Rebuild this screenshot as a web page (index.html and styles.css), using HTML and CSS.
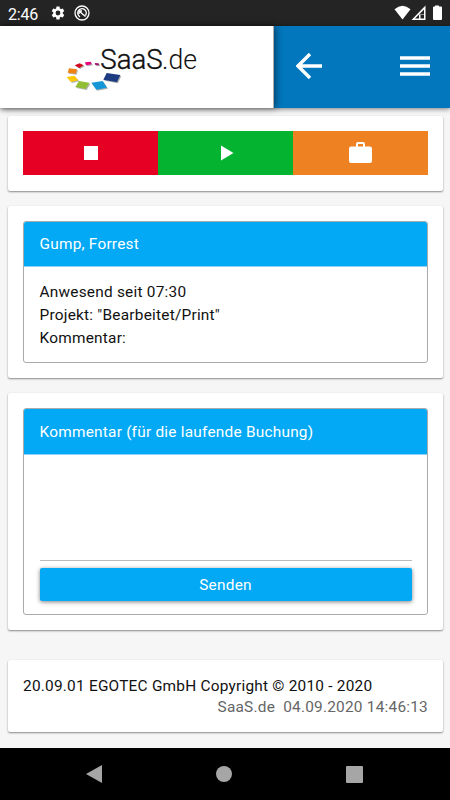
FILE: index.html
```html
<!DOCTYPE html>
<html lang="de">
<head>
    <meta charset="utf-8">
    <title>SaaS.de</title>
    <link rel="stylesheet" href="styles.css">
</head>
<body>
    <div class="statusbar">
        <span class="time">2:46</span>
        <svg class="gear" width="16" height="16" viewBox="0 0 24 24"><path fill="#fff" d="M19.14 12.94c.04-.3.06-.61.06-.94 0-.32-.02-.64-.07-.94l2.03-1.58a.49.49 0 0 0 .12-.61l-1.92-3.32a.49.49 0 0 0-.59-.22l-2.39.96a7 7 0 0 0-1.62-.94l-.36-2.54a.48.48 0 0 0-.48-.41h-3.84a.48.48 0 0 0-.47.41l-.36 2.54a7.3 7.3 0 0 0-1.62.94l-2.39-.96a.48.48 0 0 0-.59.22L2.74 8.87a.48.48 0 0 0 .12.61l2.03 1.58a6 6 0 0 0 0 1.88l-2.03 1.58a.49.49 0 0 0-.12.61l1.92 3.32c.12.22.37.29.59.22l2.39-.96c.5.38 1.03.7 1.62.94l.36 2.54c.05.24.24.41.48.41h3.84c.24 0 .44-.17.47-.41l.36-2.54a7 7 0 0 0 1.62-.94l2.39.96c.22.08.47 0 .59-.22l1.92-3.32a.48.48 0 0 0-.12-.61zM12 15.6a3.6 3.6 0 1 1 0-7.2 3.6 3.6 0 0 1 0 7.2z"/></svg>
        <svg class="badge" width="16" height="16" viewBox="0 0 16 16" fill="none" stroke="#fff">
            <circle cx="8" cy="8" r="7" stroke-width="1.3"/>
            <path d="M6 11.800A4.300 4.300 0 1 1 11.500 10.500" stroke-width="1.300"/>
            <path d="M5 6L11.500 11.500M5 6.500V9M5 6H8" stroke-width="1.400"/>
        </svg>
        <svg class="signals" width="50" height="16" viewBox="0 0 50 16">
            <path fill="#fff" d="M.5 4.3Q8.500-2.700 16.500 4.300L8.500 14.500z"/>
            <path fill="#fff" fill-rule="evenodd" d="M31.500.5v14.500H17.500zM30 4.500L21 13.500h4V9.500h5zM26.500 10v3.500H30V10z"/>
            <path fill="#fff" d="M41 1.500V.5h4v1h2q1 0 1 1V14q0 1-1 1h-7q-1 0-1-1V2.500q0-1 1-1z"/>
        </svg>
    </div>

    <div class="header">
        <div class="logo">
            <svg width="140" height="52" viewBox="180 126 420 156">
                <g class="tiles">
                    <path fill="#a0146e" d="M284 189l12 1 1 6-11-1z"/>
                    <path fill="#e5007d" d="M255 187l17-2 3 8-17 3z"/>
                    <path fill="#d20a1e" d="M224 196l15-6 12 6-13 8z"/>
                    <path fill="#f08214" d="M207 205l24 3-4 13-24-3z"/>
                    <path fill="#ffc800" d="M200 231l23-4 12 14-22 5z"/>
                    <path fill="#91be32" d="M237 243l31 5-11 19-31-6z"/>
                    <path fill="#1496d7" d="M274 248l34-5 13 20-32 6z"/>
                    <path fill="#1e3c82" d="M320 219l41 6-10 22-41-8z"/>
                </g>
                <text class="name" x="301" y="208" textLength="187" lengthAdjust="spacingAndGlyphs">SaaS</text>
                <text class="name light" x="486" y="208" textLength="105" lengthAdjust="spacingAndGlyphs">.de</text>
            </svg>
        </div>
        <div class="buttons">
            <svg width="26" height="26" viewBox="0 0 26 26"><path d="M26 13H2M14 1L2 13L14 25" fill="none" stroke="#fff" stroke-width="3.400"/></svg>
            <svg width="30" height="20" viewBox="0 0 30 20"><path d="M0 2h30M0 10h30M0 18h30" stroke="#fff" stroke-width="3.500"/></svg>
        </div>
    </div>

    <div class="content">
        <div class="card actions">
            <div class="action stop"><svg width="14" height="14"><path fill="#fff" d="M0 0h14v14H0z"/></svg></div>
            <div class="action play"><svg width="16" height="16"><path fill="#fff" d="M3 .5v15L15.500 8z"/></svg></div>
            <div class="action project"><svg width="23" height="23" viewBox="0 0 23 23"><path fill="#fff" fill-rule="evenodd" d="M7 4.500V2q0-2 2-2h5q2 0 2 2v2.500h5q2 0 2 2V19q0 2-2 2H2q-2 0-2-2V6.500q0-2 2-2zM9 4.500h5V2H9z"/></svg></div>
        </div>

        <div class="card">
            <div class="panel">
                <div class="panel-title">Gump, Forrest</div>
                <div class="panel-body info">
                    Anwesend seit 07:30<br>
                    Projekt: "Bearbeitet/Print"<br>
                    Kommentar:
                </div>
            </div>
        </div>

        <div class="card">
            <div class="panel">
                <div class="panel-title tall">Kommentar (für die laufende Buchung)</div>
                <div class="panel-body comment">
                    <textarea></textarea>
                    <button>Senden</button>
                </div>
            </div>
        </div>

        <div class="card footer">
            <div>20.09.01 EGOTEC GmbH Copyright © 2010 - 2020</div>
            <div class="stamp">SaaS.de&nbsp; 04.09.2020 14:46:13</div>
        </div>
    </div>

    <div class="navbar">
        <svg width="16" height="18"><path fill="#a6a6a6" d="M16 0v18L0 9z"/></svg>
        <svg width="16" height="16"><circle cx="8" cy="8" r="8" fill="#a6a6a6"/></svg>
        <svg width="17" height="17"><rect width="17" height="17" rx="1" fill="#a6a6a6"/></svg>
    </div>
</body>
</html>
```

FILE: styles.css
```css
* {
    box-sizing: border-box;
}

body {
    margin: 0;
    height: 800px;
    display: flex;
    flex-direction: column;
    overflow: hidden;
    background: #f6f6f6;
    color: #111;
    font-family: Roboto, sans-serif;
    font-size: 15.4px;
    letter-spacing: 0.23px;
}

svg {
    display: block;
    flex: none;
}

.statusbar {
    height: 26px;
    padding: 0 8px;
    display: flex;
    align-items: center;
    background: #242424;
    color: #fff;
}

.time {
    width: 42px;
    font-size: 16px;
    letter-spacing: -0.2px;
    padding-top: 2px;
}

.badge {
    margin-left: 8px;
}

.signals {
    margin-left: auto;
    margin-right: -2px;
}

.header {
    height: 82px;
    display: flex;
    background: #0277bd;
    box-shadow: 0 1px 5px rgba(0, 0, 0, 0.5);
}

.logo {
    width: 274px;
    padding: 16px 0 0 60px;
    background: #fff;
    border-right: 1px solid #aaa;
    box-shadow: 2px 0 7px rgba(0, 0, 0, 0.45);
}

.tiles {
    filter: drop-shadow(3px 3px 2px rgba(0, 0, 0, 0.3));
}

.name {
    font-size: 84px;
    font-weight: 300;
    letter-spacing: 0;
    fill: #111;
    stroke: #111;
    stroke-width: 1.2px;
}

.light {
    stroke: none;
}

.buttons {
    flex: 1;
    display: flex;
    align-items: center;
    justify-content: space-between;
    padding: 0 20px 2px 22px;
}

.content {
    flex: 1;
    padding: 8px 7px 0 8px;
}

.card {
    padding: 15px;
    margin-bottom: 15px;
    background: #fff;
    border-radius: 2px;
    box-shadow: 0 1px 2px rgba(0, 0, 0, 0.45);
}

.actions {
    display: flex;
    height: 75px;
}

.action {
    flex: 1;
    display: flex;
    align-items: center;
    justify-content: center;
    height: 44px;
}

.stop {
    background: #e60023;
}

.play {
    background: #04b431;
}

.project {
    background: #ee8122;
}

.panel {
    border: 1px solid #aaa;
    border-radius: 3px;
}

.panel-title {
    height: 45px;
    line-height: 45px;
    padding-left: 15.5px;
    background: #03a9f4;
    border-bottom: 1px solid #8fd3f5;
    border-radius: 2px 2px 0 0;
    color: #fff;
}

.tall {
    height: 46px;
    line-height: 47px;
}

.panel-body {
    padding: 0 15.5px;
}

.info {
    height: 95px;
    padding-top: 14px;
    line-height: 23px;
}

.comment {
    height: 159px;
}

textarea {
    display: block;
    width: 100%;
    height: 106px;
    border: 0;
    border-bottom: 1px solid #bbb;
    background: none;
    resize: none;
}

button {
    display: block;
    width: 100%;
    height: 33px;
    margin-top: 7px;
    border: 0;
    border-radius: 2px;
    background: #03a9f4;
    box-shadow: 0 1px 4px rgba(0, 0, 0, 0.5);
    color: #fff;
    font: inherit;
    letter-spacing: inherit;
}

.footer {
    height: 72px;
    margin-top: 30px;
    padding-top: 16px;
    line-height: 21px;
}

.stamp {
    text-align: right;
    color: #666;
}

.navbar {
    height: 52px;
    padding: 0 87px 0 86px;
    display: flex;
    align-items: center;
    justify-content: space-between;
    background: #000;
}
```
